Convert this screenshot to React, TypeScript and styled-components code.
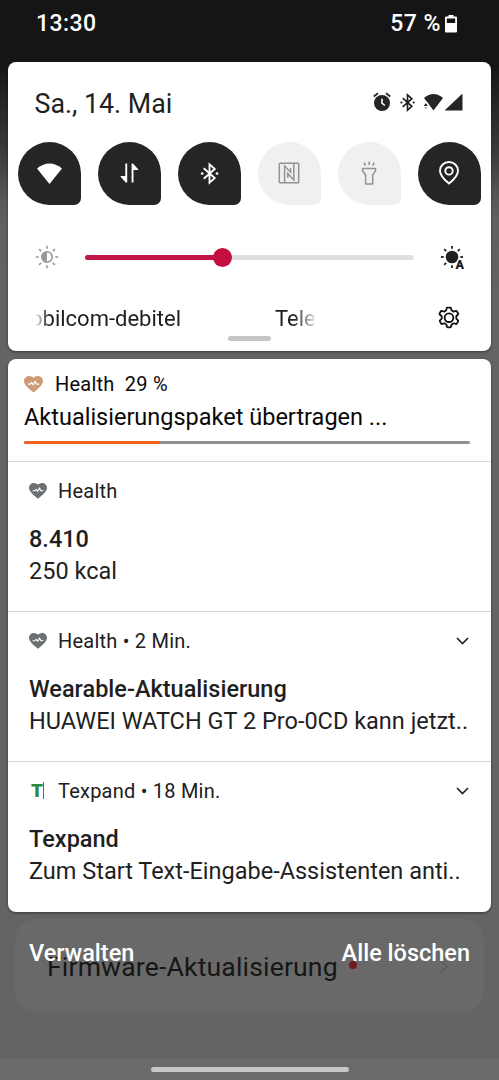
import React from "react";
import styled, { createGlobalStyle } from "styled-components";

const GlobalStyle = createGlobalStyle`
  * { box-sizing: border-box; }
  body { margin: 0; background: #141414; }
`;

const Screen = styled.div`
  position: relative;
  width: 499px;
  height: 1080px;
  overflow: hidden;
  font-family: Roboto, "Liberation Sans", sans-serif;
  color: #1f1f1f;
  background: linear-gradient(
    to bottom,
    #151515 0,
    #151515 64px,
    #252525 100px,
    #3a3a3a 150px,
    #555656 195px,
    #5f6060 220px,
    #636564 300px,
    #636564 1059px
  );
`;

/* The dimmed settings page that shines through beneath the shade */
const Backdrop = styled.div`
  position: absolute;
  inset: 0;
  display: flex;
  flex-direction: column;
  justify-content: flex-end;
`;

const BackdropCard = styled.div`
  display: flex;
  align-items: center;
  height: 93px;
  margin: 0 15px 47px;
  padding: 2px 35px 0 32px;
  border-radius: 22px;
  background: #696969;
`;

const BackdropTitle = styled.span`
  font-size: 26.6px;
  line-height: 30px;
  letter-spacing: 0.15px;
  color: #161616;
  white-space: nowrap;
`;

const BackdropDot = styled.span`
  width: 8px;
  height: 8px;
  margin: 0 auto 3px 11px;
  border-radius: 50%;
  background: #6f1a20;
`;

const NavBar = styled.div`
  display: flex;
  justify-content: center;
  height: 21px;
  padding-top: 8px;
  background: #6b6969;
`;

const HomeIndicator = styled.span`
  width: 198px;
  height: 5px;
  border-radius: 3px;
  background: #c8c6c6;
`;

const Shade = styled.div`
  position: relative;
  display: flex;
  flex-direction: column;
  padding: 0 8px;
`;

const StatusBar = styled.div`
  display: flex;
  align-items: center;
  justify-content: space-between;
  height: 48px;
  margin-bottom: 14px;
  padding: 0 33px 0 28px;
  color: #fff;
  font-size: 23px;
  font-weight: 500;
  line-height: 28px;
`;

const Clock = styled.span`
  letter-spacing: 0.4px;
`;

const Battery = styled.div`
  display: flex;
  align-items: center;
  gap: 4px;
  letter-spacing: 0.5px;
`;

const Card = styled.section`
  width: 483px;
  border-radius: 8px;
  background: #fff;
  box-shadow: 0 1px 3px rgba(0, 0, 0, 0.45);
`;

const QuickSettings = styled(Card)`
  display: flex;
  flex-direction: column;
  height: 289px;
  margin-bottom: 8px;
  padding-top: 28px;
`;

const DateRow = styled.div`
  display: flex;
  align-items: center;
  justify-content: space-between;
  height: 28px;
  padding: 0 28.5px 0 26.5px;
  font-size: 26.8px;
  line-height: 28px;
`;

const StatusIcons = styled.div`
  display: flex;
  align-items: center;
  gap: 6px;
  height: 24px;
  margin-top: -4px;
`;

const Tiles = styled.div`
  display: flex;
  gap: 17.5px;
  margin: 24px 0 0 10px;
`;

const Tile = styled.div<{ $on?: boolean }>`
  display: flex;
  align-items: center;
  justify-content: center;
  width: 62.5px;
  height: 62.5px;
  border-radius: 32px 32px 7px 32px;
  background: ${(p) => (p.$on ? "#252525" : "#f0f0f0")};
  color: ${(p) => (p.$on ? "#fff" : "#929292")};
`;

const Brightness = styled.div`
  display: flex;
  align-items: center;
  height: 26px;
  margin-top: 39.5px;
  padding: 0 24px 0 27px;
`;

const Track = styled.div`
  display: flex;
  align-items: center;
  width: 329px;
  height: 5px;
  margin: 0 25px 0 26px;
  border-radius: 3px;
  background: #e0e0e0;
`;

const TrackFill = styled.div`
  width: 137px;
  height: 5px;
  border-radius: 3px;
  background: #c01546;
`;

const Thumb = styled.div`
  flex: none;
  width: 19px;
  height: 19px;
  margin-left: -9.5px;
  border-radius: 50%;
  background: #c5103f;
`;

const CarrierRow = styled.div`
  display: flex;
  align-items: center;
  justify-content: space-between;
  height: 26px;
  margin-top: 35px;
  padding: 0 29px 0 27px;
`;

const Marquee = styled.div`
  display: flex;
  width: 279px;
  padding-top: 1px;
  overflow: hidden;
  font-size: 22px;
  line-height: 26px;
  white-space: nowrap;
  mask-image: linear-gradient(to right, transparent 0, #000 14px, #000 258px, transparent 284px);
`;

const Carrier = styled.span`
  flex: none;
  width: 245px;
  margin-left: -5px;
  & + & {
    width: auto;
    margin-left: 0;
  }
`;

const DragHandle = styled.div`
  align-self: center;
  width: 43px;
  height: 5px;
  margin-top: 5px;
  border-radius: 3px;
  background: #c5c5c5;
`;

const Notifications = styled(Card)`
  height: 553px;
`;

const Item = styled.article<{ $progress?: boolean }>`
  height: ${(p) => (p.$progress ? 103 : 150)}px;
  padding: ${(p) => (p.$progress ? "12px 21px 0 16px" : "16px 22px 0 21px")};
  border-bottom: 1px solid #d5d7d6;
  &:last-child {
    border-bottom: none;
  }
`;

const Header = styled.header<{ $color?: string; $gap: number }>`
  display: flex;
  align-items: center;
  gap: ${(p) => p.$gap}px;
  height: 26px;
  color: ${(p) => p.$color ?? "#202020"};
  font-size: 20px;
  line-height: 26px;
  white-space: pre;
`;

const AppName = styled.span`
  flex: 1;
  letter-spacing: 0.22px;
`;

const Title = styled.h2`
  margin: 19px 0 0;
  font-size: 23.5px;
  font-weight: 500;
  line-height: 32px;
`;

const Body = styled.p`
  margin: 0;
  font-size: 23.5px;
  line-height: 32px;
  white-space: nowrap;
`;

const ProgressText = styled(Body)`
  margin-top: 4px;
  color: #080808;
`;

const Progress = styled.div`
  height: 3px;
  margin-top: 8px;
  border-radius: 2px;
  background: #909090;
  overflow: hidden;
`;

const ProgressFill = styled.div`
  height: 3px;
  background: #f26022;
`;

const TexpandLogo = styled.span`
  width: 18px;
  height: 20px;
  padding-left: 2px;
  color: #2b8a3e;
  font: 900 19px/20px Roboto, sans-serif;
  &::after {
    content: "";
    display: inline-block;
    width: 1px;
    height: 17px;
    background: #2b8a3e;
    vertical-align: -2px;
  }
`;

const Actions = styled.footer`
  display: flex;
  justify-content: space-between;
  margin-top: 25px;
  padding: 0 21px;
  color: #fff;
  font-size: 23.5px;
  font-weight: 500;
  line-height: 32px;
`;

const BatteryIcon = () => (
  <svg width="13" height="19" viewBox="0.500 0.500 13 19">
    <path fill="#fff" fillRule="evenodd" d="M4 0h5v2h2.200q1.300 0 1.300 1.300v13.400q0 1.300-1.300 1.300H1.800Q.5 18 .5 16.700V3.300Q.5 2 1.800 2H4zM2.300 4v4.500h8.400V4z" />
  </svg>
);

const AlarmIcon = () => (
  <svg width="20" height="20" viewBox="0 0 20 20">
    <circle cx="10" cy="11" r="8" fill="#252525" />
    <path d="M1.700 4.500 6 1.300M18.300 4.500 14 1.300" stroke="#252525" strokeWidth="1.700" fill="none" />
    <path d="M10 6.800v4.400l2.800 2.300" stroke="#fff" strokeWidth="1.600" fill="none" />
  </svg>
);

const BluetoothIcon = ({ size, weight }: { size: number; weight: number }) => (
  <svg width={size} height={size} viewBox="0 0 22 22" fill="none" stroke="currentColor" strokeWidth={weight}>
    <path d="M5.500 6 16 15.400 11 19.800V2.200L16 6.600 5.500 16" />
    <circle cx="4" cy="11" r="1.300" fill="currentColor" stroke="none" />
    <circle cx="18.200" cy="11" r="1.300" fill="currentColor" stroke="none" />
  </svg>
);

const SmallWifiIcon = () => (
  <svg width="20" height="18" viewBox="0 0 20 18">
    <path d="M1 5Q10.500-3 20 5l-9.500 12.500z" fill="#252525" />
    <path d="M.2 9.500V16h5.600L5 9.500z" fill="#fff" />
    <path d="m.8 13 2-2.900 2 2.900z" fill="#252525" />
    <path d="m1 14.200 1.800 2.300 1.800-2.300z" fill="#a8a8a8" />
  </svg>
);

const SignalIcon = styled.span`
  width: 18px;
  height: 17px;
  margin-left: -4px;
  background: #252525;
  clip-path: polygon(100% 0, 100% 100%, 0 100%);
`;

const WifiIcon = () => (
  <svg width="25" height="21" viewBox="0 0 25 21">
    <path d="M0 5.500Q12.500-4.500 25 5.500L12.500 21z" fill="currentColor" />
  </svg>
);

const DataIcon = () => (
  <svg width="19" height="20" viewBox="0 0 19 20" fill="currentColor">
    <path d="M5.300.5h1.900v19h-1.500L.6 13.800V13h4.700z" />
    <path d="M11.600.5h1.300l5.300 5.700V7h-4.700v12.500h-1.900z" />
  </svg>
);

const NfcIcon = () => (
  <svg width="22" height="22" viewBox="0 0 22 22" fill="none" stroke="currentColor" strokeWidth="1.500">
    <rect x="1.300" y="1.300" width="19.400" height="19.400" rx=".8" />
    <path d="M6.600 20.500V4l6 6.200V6M15.800 2v16L9.800 11.500V16" />
  </svg>
);

const TorchIcon = () => (
  <svg width="16" height="24" viewBox="0 0 16 24" fill="none" stroke="currentColor" strokeWidth="1.500">
    <path d="M1.500 7.500h13v2.300L11.700 14v9H4.600v-9L1.500 9.800z" strokeLinejoin="round" />
    <path d="M8.200.5v3.600M3 1.700l1.500 3M13.300 1.700l-1.700 3" />
  </svg>
);

const PinIcon = () => (
  <svg width="20" height="24" viewBox="0 0 20 24" fill="none" stroke="currentColor" strokeWidth="1.900">
    <path d="M10 22.600Q1 15.200 1 9.700a9 8.700 0 0 1 18 0Q19 15.200 10 22.600z" />
    <circle cx="10" cy="9.900" r="3.700" />
  </svg>
);

const rays = [0, 45, 90, 135, 180, 225, 270, 315];

const BrightnessLowIcon = () => (
  <svg width="24" height="24" viewBox="0 0 24 24" fill="none" stroke="#999" strokeWidth="1.600">
    <circle cx="12" cy="12" r="5.200" />
    <path d="M12 6.500a5.500 5.500 0 0 0 0 11z" fill="#999" stroke="none" />
    {rays.map((a) => (
      <path key={a} d="M12 .8v2.900" transform={`rotate(${a} 12 12)`} />
    ))}
  </svg>
);

const BrightnessAutoIcon = () => (
  <svg width="26" height="26" viewBox="0 0 26 26" stroke="#202020" strokeWidth="1.800">
    <circle cx="13" cy="13" r="6.300" fill="#202020" stroke="none" />
    {rays.filter((a) => a !== 135).map((a) => (
      <path key={a} d="M13 2v2.700" transform={`rotate(${a} 13 13)`} />
    ))}
    <text x="16.500" y="24.500" fontSize="12.500" fontWeight="900" fill="#202020" stroke="#fff" strokeWidth="1.600" paintOrder="stroke">
      A
    </text>
  </svg>
);

const GearIcon = () => (
  <svg width="26" height="26" viewBox="0 0 24 24" fill="none" stroke="#111" strokeWidth="1.700" strokeLinejoin="round">
    <path d="M10.800 2.400h2.400q.6 0 .7.600l.3 1.500q.1.500.6.800l1 .6q.5.300 1 .1l1.500-.5q.6-.2.900.3l1.200 2.100q.3.500-.1.900l-1.200 1.100q-.4.400-.4.900v1.400q0 .5.400.900l1.200 1.100q.4.400.1.900l-1.200 2.100q-.3.500-.9.300l-1.500-.5q-.5-.2-1 .1l-1 .6q-.5.300-.6.800l-.3 1.500q-.1.600-.7.600h-2.400q-.6 0-.7-.6l-.3-1.500q-.1-.5-.6-.8l-1-.6q-.5-.3-1-.1l-1.500.5q-.6.200-.9-.3l-1.200-2.100q-.3-.5.100-.9l1.200-1.100q.4-.4.400-.9v-1.400q0-.5-.4-.9L3.400 8.800q-.4-.4-.1-.9l1.200-2.100q.3-.5.900-.3l1.500.5q.5.200 1-.1l1-.6q.5-.3.600-.8l.3-1.500q.1-.6.700-.6z" />
    <circle cx="12" cy="11.700" r="4" />
  </svg>
);

const HeartIcon = ({ width, color }: { width: number; color: string }) => (
  <svg width={width} height={width * 0.88} viewBox="2 3 20 18.350" preserveAspectRatio="none">
    <path
      fill={color}
      d="m12 21.350-1.450-1.320C5.400 15.360 2 12.280 2 8.500 2 5.420 4.420 3 7.500 3c1.740 0 3.410.81 4.500 2.090C13.090 3.810 14.760 3 16.500 3 19.580 3 22 5.420 22 8.500c0 3.780-3.400 6.860-8.550 11.540z"
    />
    <path d="M6 12h2.600l1.500-1.700 1.600 2.300 2-3.600 1.600 3H18" stroke="#fff" strokeWidth="1.300" fill="none" />
  </svg>
);

const ChevronDown = () => (
  <svg width="13" height="8" viewBox="0 0 13 8" fill="none" stroke="#202020" strokeWidth="1.600">
    <path d="m1 1 5.500 5.500L12 1" />
  </svg>
);

const ChevronRight = () => (
  <svg width="10" height="15" viewBox="0 0 10 15" fill="none" stroke="#5b5b5b" strokeWidth="1.600">
    <path d="m1 1 7 6.500-7 6.500" />
  </svg>
);

export default function App() {
  return (
    <Screen>
      <GlobalStyle />
      <Backdrop>
        <BackdropCard>
          <BackdropTitle>Firmware-Aktualisierung</BackdropTitle>
          <BackdropDot />
          <ChevronRight />
        </BackdropCard>
        <NavBar>
          <HomeIndicator />
        </NavBar>
      </Backdrop>

      <Shade>
        <StatusBar>
          <Clock>13:30</Clock>
          <Battery>
            57 %
            <BatteryIcon />
          </Battery>
        </StatusBar>

        <QuickSettings>
          <DateRow>
            <span>Sa., 14. Mai</span>
            <StatusIcons>
              <AlarmIcon />
              <BluetoothIcon size={19} weight={1.9} />
              <SmallWifiIcon />
              <SignalIcon />
            </StatusIcons>
          </DateRow>

          <Tiles>
            <Tile $on><WifiIcon /></Tile>
            <Tile $on><DataIcon /></Tile>
            <Tile $on><BluetoothIcon size={23} weight={1.8} /></Tile>
            <Tile><NfcIcon /></Tile>
            <Tile><TorchIcon /></Tile>
            <Tile $on><PinIcon /></Tile>
          </Tiles>

          <Brightness>
            <BrightnessLowIcon />
            <Track>
              <TrackFill />
              <Thumb />
            </Track>
            <BrightnessAutoIcon />
          </Brightness>

          <CarrierRow>
            <Marquee>
              <Carrier>obilcom-debitel</Carrier>
              <Carrier>Tele</Carrier>
            </Marquee>
            <GearIcon />
          </CarrierRow>
          <DragHandle />
        </QuickSettings>

        <Notifications>
          <Item $progress>
            <Header $gap={12} $color="#0a0a0a">
              <HeartIcon width={19} color="#cf9c78" />
              <AppName>Health  29 %</AppName>
            </Header>
            <ProgressText>Aktualisierungspaket übertragen ...</ProgressText>
            <Progress>
              <ProgressFill style={{ width: "30.5%" }} />
            </Progress>
          </Item>

          <Item>
            <Header $gap={11}>
              <HeartIcon width={18} color="#6d7073" />
              <AppName>Health</AppName>
            </Header>
            <Title>8.410</Title>
            <Body>250 kcal</Body>
          </Item>

          <Item>
            <Header $gap={11}>
              <HeartIcon width={18} color="#6d7073" />
              <AppName>Health • 2 Min.</AppName>
              <ChevronDown />
            </Header>
            <Title>Wearable-Aktualisierung</Title>
            <Body>HUAWEI WATCH GT 2 Pro-0CD kann jetzt..</Body>
          </Item>

          <Item>
            <Header $gap={11}>
              <TexpandLogo>T</TexpandLogo>
              <AppName>Texpand • 18 Min.</AppName>
              <ChevronDown />
            </Header>
            <Title>Texpand</Title>
            <Body>Zum Start Text-Eingabe-Assistenten anti..</Body>
          </Item>
        </Notifications>

        <Actions>
          <span>Verwalten</span>
          <span>Alle löschen</span>
        </Actions>
      </Shade>
    </Screen>
  );
}
